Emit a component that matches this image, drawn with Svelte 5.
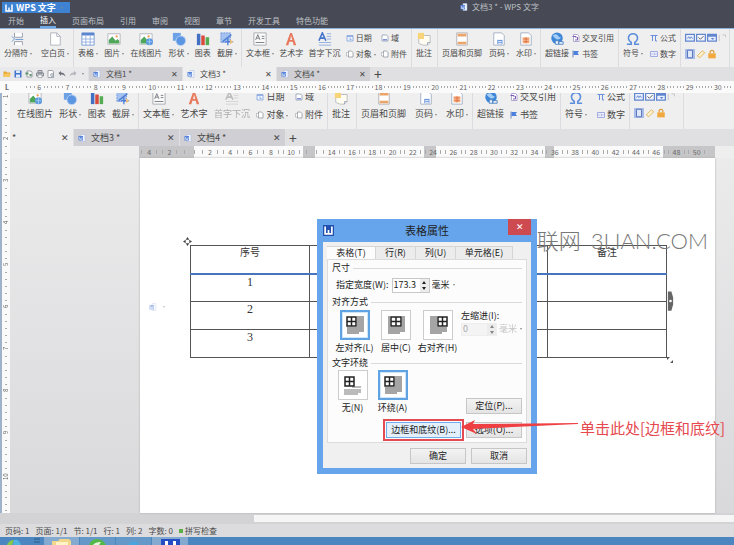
<script lang="ts">
  type Tool = { label: string; icon: string; caret?: boolean; off?: boolean };
  type Item = Tool | { rows: Tool[] };

  const menus = ['开始', '插入', '页面布局', '引用', '审阅', '视图', '章节', '开发工具', '特色功能'];

  const groups: Item[][] = [
    [
      { label: '分隔符', icon: 'break', caret: true },
      { label: '空白页', icon: 'blank', caret: true }
    ],
    [
      { label: '表格', icon: 'table', caret: true },
      { label: '图片', icon: 'picture', caret: true },
      { label: '在线图片', icon: 'online' },
      { label: '形状', icon: 'shape', caret: true },
      { label: '图表', icon: 'chart' },
      { label: '截屏', icon: 'capture', caret: true }
    ],
    [
      { label: '文本框', icon: 'textbox', caret: true },
      { label: '艺术字', icon: 'wordart' },
      { label: '首字下沉', icon: 'dropcap' },
      { rows: [{ label: '日期', icon: 'date' }, { label: '对象', icon: 'object', caret: true }] },
      { rows: [{ label: '域', icon: 'field' }, { label: '附件', icon: 'object' }] }
    ],
    [{ label: '批注', icon: 'note' }],
    [
      { label: '页眉和页脚', icon: 'header' },
      { label: '页码', icon: 'pageno', caret: true },
      { label: '水印', icon: 'stamp', caret: true }
    ],
    [
      { label: '超链接', icon: 'link' },
      { rows: [{ label: '交叉引用', icon: 'cross' }, { label: '书签', icon: 'flag' }] }
    ],
    [
      { label: '符号', icon: 'omega', caret: true },
      { rows: [{ label: '公式', icon: 'pi' }, { label: '数字', icon: 'number' }] }
    ]
  ];

  // 内层窗口只露出后半部分
  const innerGroups: Item[][] = [
    groups[1].slice(2),
    groups[2].map((it) => ('label' in it && it.icon === 'dropcap' ? { ...it, off: true } : it)),
    ...groups.slice(3)
  ];

  const controls = ['ab', 'check', 'combo', 'more', 'frame', 'eraser', 'lock'];
  const quick = ['folder', 'save', 'export', 'print', 'preview', 'undo', 'redo'];

  const topRuler = Array.from({ length: 25 }, (_, i) => i + 6);
  const docRuler = Array.from({ length: 28 }, (_, i) => Math.abs(i * 2 - 4));
  const sideRuler = Array.from({ length: 10 }, (_, i) => i + 1);

  const rows = ['1', '2', '3'];
  const status = ['页码: 1', '页面: 1/1', '节: 1/1', '行: 1', '列: 2', '字数: 0'];

  const dialogTabs = ['表格(T)', '行(R)', '列(U)', '单元格(E)'];
  let tab = $state(0);
  let align = $state('left');
  let wrap = $state('around');
  let width = $state('173.3');
</script>

{#snippet glyph(name: string)}
  <svg class="glyph" viewBox="0 0 16 16" aria-hidden="true">
    {#if name === 'break'}
      <path d="M4 1v5h9V1M4 15v-4h9v4" fill="#fff" stroke="#8b95a5" />
      <path d="M1 5l3 3-3 3M5 8.500h9" fill="none" stroke="#5b8fd0" />
    {:else if name === 'blank'}
      <path d="M3 1h7l4 4v10H3z" fill="#fff" stroke="#a9afb8" /><path d="M10 1v4h4" fill="none" stroke="#a9afb8" />
    {:else if name === 'table'}
      <path d="M1 1h14v14H1z" fill="#fff" stroke="#6f94d2" /><path d="M1 1h14v3H1z" fill="#5b86cf" />
      <path d="M1 8h14M1 11.500h14M5.500 4v11M10.500 4v11" stroke="#8facdd" />
    {:else if name === 'picture' || name === 'online'}
      <path d="M1 2h14v12H1z" fill="#fff" stroke="#b0b4ba" />
      <path d="M2 13V9l4-4 4 5 2-2 2 2v3z" fill="#4fa65a" /><circle cx="11" cy="5" r="1.300" fill="#ee9a4d" />
      {#if name === 'online'}<circle cx="12" cy="11" r="4" fill="#5b9be0" /><path d="M9 11h6M12 7v8" stroke="#bcd8f5" stroke-width=".7" />{/if}
    {:else if name === 'shape'}
      <path d="M1 1h9v9H1z" fill="#6ca1e6" /><circle cx="10" cy="10" r="5.500" fill="#5c95e2" stroke="#b8d3f5" />
    {:else if name === 'chart'}
      <path d="M1 2h4v13H1z" fill="#4470c4" /><path d="M6 4h4v11H6z" fill="#d94b3d" /><path d="M11 6h4v9h-4z" fill="#55ab54" />
    {:else if name === 'capture'}
      <path d="M1 1h11v11H1z" fill="#a4c1f0" stroke="#6d96dc" stroke-dasharray="2 1" /><path d="M3 11L13 3M9 7v8M6 11h9" stroke="#4e7fd2" stroke-width="1.500" /><path d="M11 8l4 3-3 3z" fill="#efbb7b" />
    {:else if name === 'textbox'}
      <path d="M1 1h14v14H1z" fill="#fafafa" stroke="#a2a6ac" /><path d="M3 9l2.500-6L8 9M4 7h3M10 5h3M10 7.500h3M3 12h10" fill="none" stroke="#6f747c" />
    {:else if name === 'wordart'}
      <path d="M2 15L7 1h2l5 14h-3l-1-4H6l-1 4zM7 9h2.500L8 4z" fill="#e8795c" />
    {:else if name === 'dropcap'}
      <path d="M1 10L5 1l4 9M3 7h4" fill="none" stroke="#4674cd" stroke-width="1.800" /><path d="M10 2h5M10 5h5M10 8h5M1 12h14M1 15h14" stroke="#8ca9e0" />
    {:else if name === 'date'}
      <path d="M2 3h12v11H2z" fill="#eef4fd" stroke="#7a9cda" stroke-width="1.500" /><path d="M2 5h12M8 7v4h3" fill="none" stroke="#7a9cda" stroke-width="1.500" />
    {:else if name === 'object'}
      <path d="M5 2h6l3 3v9H5z" fill="#fff" stroke="#8d929b" stroke-width="1.500" /><path d="M1 5h4v7H1z" fill="#fff" stroke="#8d929b" />
    {:else if name === 'field'}
      <path d="M2 2h9l3 3v9H2z" fill="#fff" stroke="#8c96ae" stroke-width="1.500" /><path d="M4 10h8v3H4z" fill="#7f93d6" />
    {:else if name === 'note'}
      <path d="M2 4h13v8l-3 3H7L2 13z" fill="#fffdf1" stroke="#b5b8bd" /><path d="M1 1h7v7H1z" fill="#f6d477" /><path d="M12 15v-3h3" fill="none" stroke="#9aa7bd" />
    {:else if name === 'header'}
      <path d="M2 1h12v14H2z" fill="#fff" stroke="#a9adb4" /><path d="M3 2h10v3H3zM3 11h10v3H3z" fill="#eba469" />
    {:else if name === 'pageno' || name === 'stamp'}
      <path d="M2 1h9l3 3v11H2z" fill="#fff" stroke="#9fabc0" />
      {#if name === 'pageno'}<path d="M6 9h6v5H6z" fill="#6c97dc" /><path d="M7 11h4M7 13h4" stroke="#fff" />
      {:else}<path d="M4 6h8v7H4z" fill="#f6b98f" /><path d="M5 8h6M5 11h6M8 6v7" stroke="#df6d3c" />{/if}
    {:else if name === 'link'}
      <circle cx="8" cy="7" r="6.500" fill="#3d86d8" /><path d="M3 4q4-3 6 0t4 2q-3 4-6 2T3 4z" fill="#a6cdf3" /><path d="M6 10h4v4H6zM10 11h5v3h-5z" fill="#eef4fb" stroke="#477fc0" />
    {:else if name === 'cross'}
      <path d="M3 1h8l3 3v11H3z" fill="#fff" stroke="#9b90bf" stroke-width="1.500" /><path d="M1 5h7v3M6 12h5V6" fill="none" stroke="#7c5cb8" stroke-width="2" />
    {:else if name === 'flag'}
      <path d="M2 1v14" stroke="#7088b8" stroke-width="2" /><path d="M3 2h11l-3 4 3 4H3z" fill="#4a7fdd" />
    {:else if name === 'omega'}
      <path d="M1 14h5v-2Q2 9 3 5.500T8 2t5 3.500T10 12v2h5" fill="none" stroke="#5c8edc" stroke-width="1.800" />
    {:else if name === 'pi'}
      <path d="M1 3h14M5 3v11M11 3v11h3" fill="none" stroke="#6b8edc" stroke-width="2" />
    {:else if name === 'number'}
      <path d="M1 3h14v10H1z" fill="#eef0fb" stroke="#8a96d8" stroke-width="1.500" /><path d="M4 6v4M7 6h2v4H7M12 6v4" fill="none" stroke="#8a96d8" />
    {:else if name === 'ab'}
      <path d="M1 2h14v11H1z" fill="#e9effc" stroke="#6287cf" stroke-width="2" /><path d="M4 9l2-3 2 3 2-3 2 3" fill="none" stroke="#6287cf" stroke-width="1.500" />
    {:else if name === 'check'}
      <path d="M1 2h14v11H1z" fill="#f4f7fd" stroke="#6287cf" stroke-width="2" /><path d="M4 7l3 3 5-5" fill="none" stroke="#555" stroke-width="1.500" />
    {:else if name === 'combo'}
      <path d="M1 2h14v11H1z" fill="#e9effc" stroke="#6287cf" stroke-width="2" /><path d="M1 2h14v4H1zM6 8h6l-3 3z" fill="#6287cf" />
    {:else if name === 'more'}
      <path d="M2 3v10M7 3h5v4" fill="none" stroke="#c4c7cd" stroke-width="1.500" />
    {:else if name === 'frame'}
      <path d="M0 0h16v16H0z" fill="#a9bce8" /><path d="M4 2h8v12H4z" fill="#dfe8fa" stroke="#5572b8" stroke-width="1.500" />
    {:else if name === 'eraser'}
      <path d="M2 11l8-8 4 3-8 8z" fill="#fdf1cf" stroke="#dfb45a" stroke-width="1.500" />
    {:else if name === 'lock'}
      <path d="M5 7V5q0-3 3-3t3 3v2" fill="none" stroke="#dd9d3e" stroke-width="2" /><path d="M2 7h12v8H2z" fill="#f0a83f" />
    {:else if name === 'folder'}
      <path d="M1 3h5l2 2h6v9H1z" fill="#e7a52f" /><path d="M3 7h13l-3 7H1z" fill="#f8c75d" />
    {:else if name === 'save'}
      <path d="M1 1h14v14H1z" fill="#3f73cc" /><path d="M4 1h8v5H4zM4 9h8v6H4z" fill="#dfe9fa" />
    {:else if name === 'export'}
      <path d="M4 2h8l2 3v9H4z" fill="#fff" stroke="#7c858f" stroke-width="1.500" /><path d="M1 5h6v4H1zM9 8h4v4H9z" fill="#5d8f68" />
    {:else if name === 'print'}
      <path d="M4 1h8v5H4zM1 6h14v6H1z" fill="#c6c9d2" stroke="#70757f" stroke-width="1.500" /><path d="M4 10h8v5H4z" fill="#fff" stroke="#70757f" />
    {:else if name === 'preview'}
      <path d="M2 1h9l2 3v11H2z" fill="#fff" stroke="#858a93" stroke-width="1.500" /><circle cx="10" cy="10" r="3" fill="#cfdcf0" stroke="#777" />
    {:else if name === 'undo'}
      <path d="M1 6l5-4v3q7 0 9 8-4-5-9-4v3z" fill="#6d7078" />
    {:else if name === 'redo'}
      <path d="M15 6l-5-4v3q-7 0-9 8 4-5 9-4v3z" fill="#b3b5bb" />
    {:else if name === 'doc'}
      <path d="M6 1h8v14H6z" fill="#eef3fc" stroke="#a9b9dc" /><path d="M1 4h9v9H1z" fill="#5583dc" /><path d="M3 6v5h5V6M5.500 8v3" fill="none" stroke="#fff" />
    {:else if name === 'wps'}
      <path d="M2 1v13h12V1M8 7v7" fill="none" stroke="#fff" stroke-width="3" />
    {/if}
  </svg>
{/snippet}

{#snippet tool(t: Tool, big: boolean)}
  <button class="tool" class:big class:off={t.off}>
    {@render glyph(t.icon)}
    <span>{t.label}{#if t.caret}<i class="caret"></i>{/if}</span>
  </button>
{/snippet}

{#snippet ribbon(list: Item[][])}
  {#each list as group}
    <div class="group">
      {#each group as item}
        {#if 'rows' in item}
          <div class="stack">
            {#each item.rows as t}{@render tool(t, false)}{/each}
          </div>
        {:else}
          {@render tool(item, true)}
        {/if}
      {/each}
    </div>
  {/each}
  <div class="group controls">
    {#each controls as c}
      <button aria-label={c}>{@render glyph(c)}</button>
    {/each}
  </div>
{/snippet}

{#snippet docTab(name: string, active: boolean)}
  <div class="doc-tab" class:active>
    {@render glyph('doc')}
    <span>{name} *</span>
    <button aria-label="关闭">✕</button>
  </div>
{/snippet}

{#snippet layoutIcon(kind: string)}
  <svg viewBox="0 0 24 24" aria-hidden="true">
    {#if kind === 'none'}
      <path d="M11 14h9M3 17h17M3 19h17M3 21h14" stroke="#777" />
      <path d="M4 4h9v9H4zM8.500 4v9M4 8.500h9" fill="#fff" stroke="#222" stroke-width="1.500" />
    {:else}
      <path d="M4 4h17M4 6h17M4 8h17M4 10h17M4 12h17M4 14h17M4 16h17M4 18h17M4 20h12" stroke="#888" stroke-width="1.300" />
      {#if kind === 'left' || kind === 'around'}
        <path d="M3 3h11v11H3z" fill="#fff" /><path d="M4 4h9v9H4zM8.500 4v9M4 8.500h9" fill="#fff" stroke="#222" stroke-width="1.500" />
      {:else if kind === 'center'}
        <path d="M6 3h12v11H6z" fill="#fff" /><path d="M7 4h10v9H7zM12 4v9M7 8.500h10" fill="#fff" stroke="#222" stroke-width="1.500" />
      {:else}
        <path d="M11 3h12v11H11z" fill="#fff" /><path d="M12 4h9v9h-9zM16.500 4v9M12 8.500h9" fill="#fff" stroke="#222" stroke-width="1.500" />
      {/if}
    {/if}
  </svg>
{/snippet}

<div class="app">
  <header>
    <div class="title-bar">
      <button class="brand">{@render glyph('wps')}WPS 文字<i class="caret"></i></button>
      <div class="title">{@render glyph('doc')}文档3 * - WPS 文字</div>
    </div>
    <nav>
      {#each menus as m}
        <button class:active={m === '插入'}>{m}</button>
      {/each}
    </nav>
  </header>

  <div class="ribbon">{@render ribbon(groups)}</div>

  <div class="tab-bar">
    <div class="quick">
      {#each quick as q}
        <button aria-label={q}>{@render glyph(q)}</button>
      {/each}
      <i class="caret"></i>
    </div>
    {@render docTab('文档1', false)}
    {@render docTab('文档3', true)}
    {@render docTab('文档4', false)}
    <button class="add" aria-label="新建">+</button>
  </div>

  <div class="ruler top-ruler">
    <b>L</b>
    {#each topRuler as n}
      <span><i></i><i></i><i></i>{n}<i></i><i></i><i></i></span>
    {/each}
  </div>

  <div class="workspace">
    <div class="side-ruler">
      {#each sideRuler as n}
        <span>{n}<i></i><i></i><i></i><i></i><i></i></span>
      {/each}
    </div>

    <div class="inner">
      <div class="ribbon inner-ribbon">{@render ribbon(innerGroups)}</div>

      <div class="tab-bar inner-tabs">
        <div class="doc-tab active first"><span>*</span><button aria-label="关闭">✕</button></div>
        {@render docTab('文档3', false)}
        {@render docTab('文档4', false)}
        <button class="add" aria-label="新建">+</button>
      </div>

      <div class="doc-ruler-row">
        <div class="ruler doc-ruler">
          {#each docRuler as n}
            <span><i></i>{n === 0 || n === 12 ? '' : n}<i></i></span>
          {/each}
        </div>
      </div>

      <div class="canvas">
        <div class="page">
          <table>
            <thead>
              <tr><th>序号</th><th></th><th></th><th>备注</th></tr>
            </thead>
            <tbody>
              {#each rows as r}
                <tr><td>{r}</td><td></td><td></td><td></td></tr>
              {/each}
            </tbody>
          </table>
          <svg class="move" viewBox="0 0 10 10" aria-hidden="true"><path d="M5 0l2 3H3zM5 10L3 7h4zM0 5l3-2v4zM10 5L7 7V3z" fill="#444" /></svg>
          <svg class="resize" viewBox="0 0 8 8" aria-hidden="true"><path d="M0 0h4L0 4zM8 8H4l4-4z" fill="#555" /></svg>
          <svg class="handle" viewBox="0 0 8 22" aria-hidden="true"><path d="M1 0h4l2 7v8l-2 7H1z" fill="#666" /><circle cx="4" cy="11" r="1.500" fill="#fff" /></svg>
          <div class="paste">{@render glyph('doc')}<i class="caret"></i></div>
          <div class="watermark"><span>联网</span><span>3LIAN.COM</span></div>
        </div>
      </div>
    </div>
  </div>

  <div class="scroll"><i></i><div></div></div>

  <footer>
    {#each status as s}<span>{s}</span>{/each}
    <span class="spell">拼写检查</span>
  </footer>

  <div class="taskbar">
    <svg viewBox="0 0 190 8" aria-hidden="true">
      <path d="M44 0h35v8H44zM152 0h36v8h-36z" fill="#9cbbd6" opacity=".7" />
      <path d="M80 0h35v8H80zM116 0h35v8h-35z" fill="#6fa0cc" opacity=".7" />
      <path d="M7 8q2-5 7-5l-2 5z" fill="#87c94c" /><path d="M14 3q5-1 7 5h-8z" fill="#4fb4df" />
      <path d="M34 2h6M34 5h6" stroke="#2f5d87" />
      <path d="M52 4h6l2-2h9l2 2v4H52z" fill="#f2d78a" /><path d="M56 5h12v3H56z" fill="#fff3c7" />
      <path d="M89 8q2-6 8-6t9 6z" fill="#52b848" /><path d="M93 8q2-3 8-3l-2 3z" fill="#e5f6df" />
      <path d="M128 8q3-5 10-3v3z" fill="#49a6dc" />
      <path d="M161 2h19v6h-19z" fill="#254ec4" /><path d="M165 4h3v4h-3zM173 4h3v4h-3z" fill="#fff" />
    </svg>
  </div>

  <div class="dialog" role="dialog" aria-label="表格属性">
    <div class="dialog-title">
      <span class="logo">{@render glyph('wps')}</span>
      <h1>表格属性</h1>
      <button class="close" aria-label="关闭">✕</button>
    </div>
    <div class="dialog-body">
      <div class="dialog-tabs">
        {#each dialogTabs as name, i}
          <button class:active={tab === i} onclick={() => (tab = i)}>{name}</button>
        {/each}
      </div>
      <div class="panel">
        <h2>尺寸</h2>
        <div class="size-row">
          <label for="w">指定宽度(W):</label>
          <div class="spin"><input id="w" bind:value={width} /><span class="arrows"><i class="up"></i><i class="down"></i></span></div>
          <select aria-label="单位"><option>毫米</option></select><i class="caret"></i>
        </div>
        <h2>对齐方式</h2>
        <div class="choices align">
          {#each [['left', '左对齐(L)'], ['center', '居中(C)'], ['right', '右对齐(H)']] as [v, text]}
            <label>
              <input type="radio" name="align" value={v} bind:group={align} />
              <span class="box">{@render layoutIcon(v)}</span>{text}
            </label>
          {/each}
          <div class="indent">
            <label for="ind">左缩进(I):</label>
            <div class="size-row">
              <div class="spin"><input id="ind" value="0" disabled /><span class="arrows"><i class="up"></i><i class="down"></i></span></div>
              <select aria-label="缩进单位" disabled><option>毫米</option></select><i class="caret"></i>
            </div>
          </div>
        </div>
        <h2>文字环绕</h2>
        <div class="wrap-row">
          <div class="choices">
            {#each [['none', '无(N)'], ['around', '环绕(A)']] as [v, text]}
              <label>
                <input type="radio" name="wrap" value={v} bind:group={wrap} />
                <span class="box">{@render layoutIcon(v)}</span>{text}
              </label>
            {/each}
          </div>
          <button class="btn">定位(P)...</button>
        </div>
        <div class="last-row">
          <div class="marked"><button class="btn focus">边框和底纹(B)...</button></div>
          <button class="btn">选项(O)...</button>
        </div>
      </div>
      <div class="dialog-actions">
        <button class="btn">确定</button>
        <button class="btn">取消</button>
      </div>
    </div>
  </div>

  <div class="callout">
    <svg viewBox="0 0 118 14" aria-hidden="true"><path d="M0 7L14 0l-2 4 105-1v1L12 9l4 5z" fill="#ee3f43" /></svg>
    <span>单击此处[边框和底纹]</span>
  </div>
</div>

<style>
  :global(body) { margin: 0; }

  .app {
    position: relative;
    display: flex;
    flex-direction: column;
    height: 100vh;
    overflow: hidden;
    background: #e9e9ea;
    color: #484848;
    font: 8px/12px "Noto Sans CJK SC", sans-serif;
  }

  button { padding: 0; border: 0; background: none; color: inherit; font: inherit; white-space: nowrap; }
  .glyph { display: block; flex: none; width: 8px; height: 8px; }
  .caret {
    display: inline-block;
    margin-left: 2px;
    border: 1px solid transparent;
    border-top: 2px solid #888;
    border-bottom: 0;
    vertical-align: middle;
  }

  /* 标题与菜单 */
  header { height: 28px; flex: none; background: #474a54; color: #bfc1c6; }
  .title-bar { position: relative; display: flex; height: 14px; padding: 0 2px; }
  .brand {
    display: flex;
    align-items: center;
    gap: 3px;
    height: 11px;
    width: 68px;
    margin-top: 2px;
    padding-left: 3px;
    background: #3d82d3;
    color: #fff;
    font-size: 9px;
    font-weight: bold;
    line-height: 11px;
  }
  .title { display: flex; align-items: center; gap: 4px; margin-left: 390px; }
  nav { display: flex; gap: 16px; padding-left: 8px; height: 14px; }
  nav .active { color: #fff; border-bottom: 2px solid #6fa7e2; }

  /* 功能区 */
  .ribbon {
    display: grid;
    grid-template-columns: 74fr 168fr 170fr 26fr 103fr 78fr 62fr 49fr 4fr;
    flex: none;
    height: 39px;
    border-top: 1px solid #8fb3dd;
    background: #efefef;
    box-sizing: border-box;
    overflow: hidden;
  }
  .group {
    display: flex;
    justify-content: space-between;
    align-items: flex-start;
    min-width: 0;
    padding: 3px 4px 0;
    border-right: 1px solid #dcdce0;
  }
  .tool { display: flex; align-items: center; gap: 2px; }
  .tool.big { flex-direction: column; gap: 1px; }
  .tool.big .glyph { width: 14px; height: 14px; }
  .off { opacity: 0.4; filter: grayscale(1); }
  .stack { display: flex; flex-direction: column; gap: 4px; }
  .controls { display: grid; grid-template-columns: repeat(4, 10px); gap: 6px 1px; justify-content: start; align-content: start; padding-top: 4px; }
  .controls .glyph { width: 10px; height: 10px; }

  .inner-ribbon {
    grid-template-columns: 129fr 189fr 29fr 116fr 88fr 69fr 54fr 50fr;
    height: 36px;
    border: 0;
    font-size: 9px;
  }
  .inner-ribbon .group { margin-top: -5px; }
  .inner-ribbon .tool.big { gap: 3px; }
  .inner-ribbon .stack { gap: 6px; }
  .inner-ribbon .group:first-child { padding-left: 7px; }

  /* 文档标签 */
  .tab-bar { display: flex; flex: none; align-items: stretch; height: 14px; background: #e0e0e2; }
  .quick { display: flex; align-items: center; justify-content: space-between; width: 88px; padding: 0 4px 0 3px; background: #e9e9eb; box-sizing: border-box; }
  .doc-tab { display: flex; align-items: center; gap: 5px; width: 93px; padding: 0 4px; background: #cfcfd4; box-sizing: border-box; margin-left: 1px; }
  .doc-tab span { flex: 1; }
  .doc-tab.active { background: #efefef; }
  .add { width: 16px; font-size: 14px; }
  .inner-tabs { height: 17px; font-size: 9px; }
  .inner-tabs .doc-tab { width: 105px; }
  .inner-tabs .first { width: 63px; padding-left: 2px; margin: 0; }

  /* 标尺 */
  .ruler { display: flex; align-items: center; background: #fafafa; color: #666; font-size: 7px; line-height: 11px; }
  .ruler span { display: flex; flex: 1; align-items: center; justify-content: space-around; width: 0; }
  .ruler i { width: 1px; height: 2px; background: #aaa; }
  .top-ruler { flex: none; height: 12px; padding-right: 2px; }
  .top-ruler b { width: 20px; padding-left: 5px; }
  .doc-ruler-row { flex: none; padding: 0 19px 0 129px; background: #eeeeef; }
  .doc-ruler {
    height: 12px;
    padding-right: 8px;
    background: linear-gradient(90deg, #c6c6c8 9.500%, #fafafa 9.500% 28.500%, #c6c6c8 28.500% 30.500%, #fafafa 30.500% 49.500%, #c6c6c8 49.500% 51.500%, #fafafa 51.500% 70.500%, #c6c6c8 70.500% 72%, #fafafa 72% 91%, #c6c6c8 91%);
  }
  .doc-ruler i { height: 4px; }

  .workspace { display: flex; flex: 1; min-height: 0; }
  .side-ruler { flex: none; width: 8px; border-left: 2px solid #9fb2cc; background: #fafafa; color: #666; font-size: 6px; line-height: 8px; overflow: hidden; }
  .side-ruler span { display: flex; flex-direction: row-reverse; align-items: center; justify-content: space-between; width: 8px; height: 42px; padding: 2px 0; box-sizing: border-box; writing-mode: vertical-rl; transform: rotate(180deg); }
  .side-ruler i { width: 2px; height: 1px; background: #aaa; }

  .inner { display: flex; flex: 1; flex-direction: column; min-width: 0; }
  .canvas { display: flex; flex: 1; min-height: 0; padding: 0 19px 0 130px; background: linear-gradient(#ebebec, #d9d9db); }
  .page { position: relative; flex: 1; padding: 87px 48px 0 50px; background: #fff; box-shadow: 0 0 2px #aaa; }

  table { width: 100%; table-layout: fixed; border-collapse: collapse; color: #333; font: 12px/14px "Liberation Serif", "Noto Sans CJK SC", serif; }
  th, td { height: 28px; padding: 0; border: 1px solid #555; box-sizing: border-box; text-align: center; vertical-align: top; }
  th { font-size: 10px; font-weight: normal; border-bottom: 2px solid #4674bd; }

  .move { position: absolute; top: 79px; left: 43px; width: 9px; height: 9px; }
  .resize { position: absolute; top: 199px; right: 42px; width: 6px; height: 6px; }
  .handle { position: absolute; top: 132px; right: 41px; width: 7px; height: 22px; }
  .paste { position: absolute; top: 145px; left: 9px; display: flex; align-items: center; gap: 4px; opacity: 0.5; }
  .watermark { position: absolute; top: 67px; right: 7px; display: flex; gap: 10px; color: #777; font: 300 22px/32px Lato, "Noto Sans CJK SC", sans-serif; white-space: nowrap; }

  .scroll { display: flex; flex: none; align-items: center; height: 11px; background: #d3d3d6; }
  .scroll i { width: 254px; }
  .scroll div { flex: 1; height: 7px; background: #f6f6f6; }
  footer { display: flex; flex: none; align-items: center; gap: 6px; height: 13px; padding-left: 5px; background: #dcdcde; }
  .spell::before { content: ""; display: inline-block; width: 4px; height: 4px; margin-right: 2px; background: #5cad43; vertical-align: middle; }
  .taskbar { flex: none; height: 8px; background: #4b86c0; }
  .taskbar svg { display: block; width: 190px; height: 8px; }

  /* 对话框 */
  .dialog { position: absolute; top: 219px; left: 317px; width: 220px; padding: 0 6px 6px; background: #66a5ec; box-sizing: border-box; color: #222; font-size: 9px; }
  .dialog-title { display: flex; align-items: flex-start; justify-content: space-between; height: 23px; }
  .logo { margin-top: 6px; padding: 1px; background: #234fae; }
  .logo .glyph { width: 9px; height: 9px; }
  .dialog h1 { margin: 0; padding-left: 12px; font-size: 11px; font-weight: normal; line-height: 23px; }
  .close { width: 23px; height: 16px; background: #cc4a50; color: #fff; font-size: 9px; }
  .dialog-body { padding: 4px; background: #f0f0f0; }
  .dialog-tabs { display: flex; height: 13px; }
  .dialog-tabs button { flex: none; width: 40px; border: 1px solid #d5d5d5; border-left: 0; border-bottom: 0; background: #ececec; }
  .dialog-tabs button:first-child { width: 49px; }
  .dialog-tabs button:last-child { width: 57px; }
  .dialog-tabs .active { background: #fcfcfc; }
  .panel { height: 184px; padding: 2px 4px 0; border: 1px solid #dcdcdc; background: #fcfcfc; box-sizing: border-box; }
  .panel h2 { display: flex; align-items: center; gap: 3px; margin: 0; font-size: 9px; font-weight: normal; line-height: 12px; }
  .panel h2::after { content: ""; flex: 1; height: 1px; background: #dadada; }
  .size-row { display: flex; align-items: center; height: 22px; padding-left: 4px; }
  .size-row select { width: 19px; padding: 0; border: 0; background: none; color: inherit; font: inherit; appearance: none; }
  .spin { display: flex; align-items: center; width: 38px; height: 15px; margin: 0 2px 0 3px; border: 1px solid #c8c8c8; background: #fff; box-sizing: border-box; }
  .spin input { flex: 1; min-width: 0; width: 0; padding: 0 0 0 1px; border: 0; background: none; color: inherit; font: inherit; }
  .arrows { display: flex; flex-direction: column; justify-content: center; gap: 3px; width: 9px; height: 13px; align-items: center; background: #ececec; }
  .up, .down { border: 2px solid transparent; }
  .up { border-top: 0; border-bottom: 3px solid #222; }
  .down { border-bottom: 0; border-top: 3px solid #222; }
  .choices { display: flex; gap: 9px; }
  .choices > label { position: relative; display: flex; flex-direction: column; align-items: center; width: 31px; gap: 2px; white-space: nowrap; }
  .choices input[type="radio"] { position: absolute; opacity: 0; }
  .align { padding: 2px 0 0 7px; height: 49px; gap: 11px; box-sizing: border-box; }
  .box { display: flex; align-items: center; justify-content: center; width: 30px; height: 30px; border: 1px solid #ccc; background: #fff; box-sizing: border-box; }
  .box svg { flex: none; width: 24px; height: 24px; }
  input:checked + .box { border: 2px solid #5fa3e3; box-shadow: inset 0 0 0 1px #cfe5fa; }
  .indent { margin-left: -3px; white-space: nowrap; }
  .indent .size-row { height: 14px; padding: 0; color: #aaa; }
  .indent .spin { margin-left: 0; width: 36px; height: 13px; border-color: #eee; background: #f4f4f4; }
  .indent .arrows { height: 11px; }
  .indent .arrows i { opacity: 0.5; }
  .wrap-row { display: flex; justify-content: space-between; align-items: flex-end; padding: 1px 0 0 5px; }
  .btn { width: 56px; height: 16px; border: 1px solid #c6c6c6; background: linear-gradient(#f3f3f3, #e4e4e4); line-height: 12px; }
  .last-row { display: flex; justify-content: flex-end; align-items: center; gap: 2px; padding-top: 5px; }
  .marked { padding: 1px; border: 2px solid #e34a52; }
  .focus { width: 75px; border-color: #6faee8; background: #e3effb; }
  .dialog-actions { display: flex; justify-content: flex-end; gap: 5px; padding-top: 5px; }

  .callout { position: absolute; top: 420px; left: 461px; display: flex; color: #e5484e; font-size: 15px; line-height: 16px; white-space: nowrap; }
  .callout svg { width: 118px; height: 14px; margin-right: 1px; }
</style>
